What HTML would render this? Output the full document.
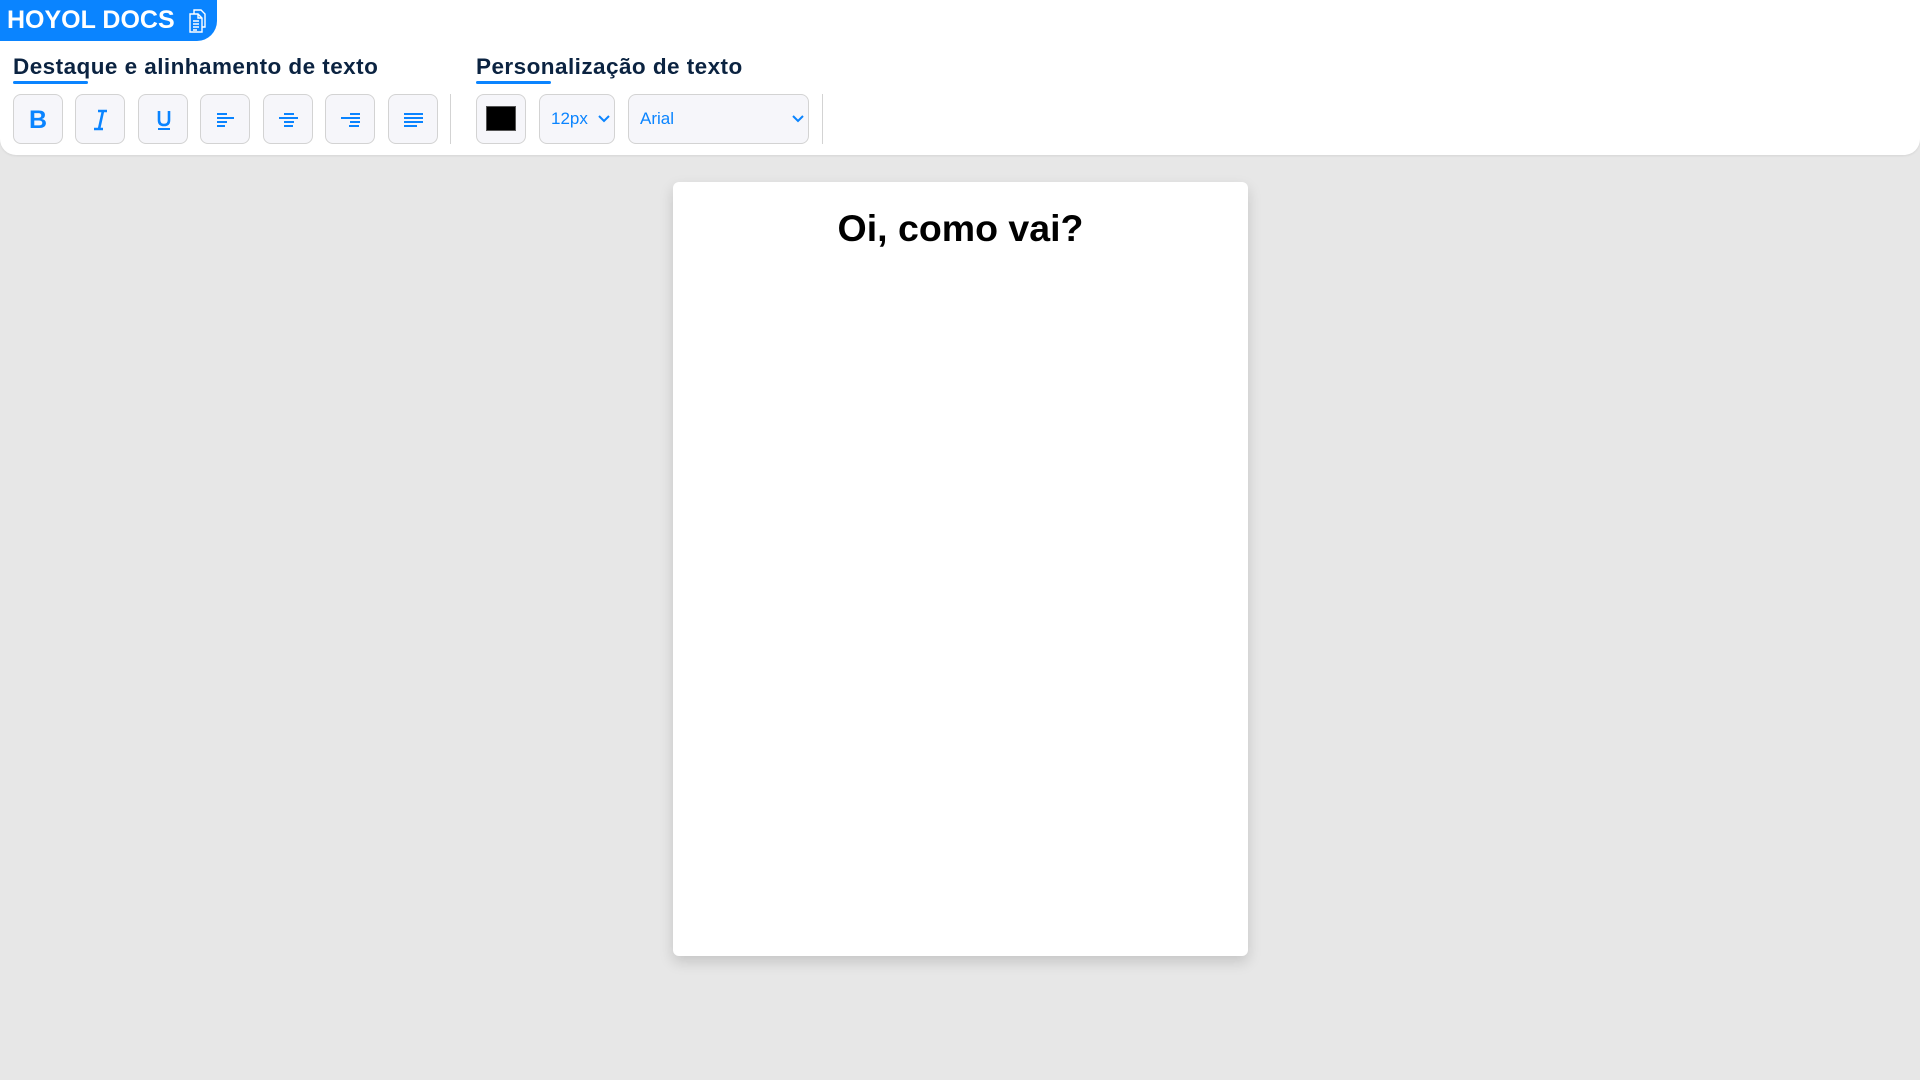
<!DOCTYPE html>
<html><head><meta charset="utf-8">
<style>
*{box-sizing:border-box;margin:0;padding:0}
body{width:1920px;height:1080px;background:#e7e7e7;font-family:"Liberation Sans",Arial,sans-serif;position:relative;overflow:hidden}
.bar{position:absolute;left:0;top:0;width:1920px;height:155px;background:#fff;border-radius:0 0 16px 16px;box-shadow:0 1px 2px rgba(0,0,0,.08)}
.badge{position:absolute;left:0;top:0;width:217px;height:41px;background:#0a84ff;border-bottom-right-radius:20px;color:#fff;font-weight:bold;font-size:25px;line-height:41px;padding-left:7px}
.badge svg{position:absolute;left:187px;top:9px}
.title{position:absolute;top:54px;font-size:22.5px;font-weight:bold;color:#0b2341;letter-spacing:.45px}
.ul{position:absolute;top:81px;height:3px;background:#0a84ff;border-radius:2px}
.btn{position:absolute;top:94px;width:50px;height:50px;background:#f6f6fa;border:1px solid #d3d3d3;border-radius:8px}
.btn svg{position:absolute;left:0;top:0}
.sep{position:absolute;top:94px;width:1px;height:50px;background:#d3d3d3}
.sel{position:absolute;top:94px;height:50px;background:#f6f6fa;border:1px solid #d3d3d3;border-radius:8px;color:#0a84ff;font-size:17px;line-height:48px;padding-left:11px}
.sel svg{position:absolute;top:20px}
.page{position:absolute;left:673px;top:182px;width:575px;height:774px;background:#fff;border-radius:6px;box-shadow:0 6px 14px rgba(0,0,0,.15)}
.page h1{text-align:center;font-size:37.5px;font-weight:bold;color:#000;margin-top:25px}
</style></head><body>
<div class="bar">
<div class="badge">HOYOL DOCS
<svg width="22" height="24" viewBox="0 0 22 24" fill="none" stroke="#fff" stroke-width="1.4"><path d="M7 1h7l4 4v13H7z"/><path d="M3 5h8l4 4v14H3z" fill="#0a84ff"/><path d="M11 5v4h4"/><path d="M6 12h6M6 15h6M6 18h6M6 21h4"/></svg></div>
<div class="title" style="left:13px">Destaque e alinhamento de texto</div>
<div class="ul" style="left:13px;width:75px"></div>
<div class="title" style="left:476px">Personalização de texto</div>
<div class="ul" style="left:476px;width:75px"></div>

<div class="btn" style="left:13px"><svg width="50" height="50"><text x="24" y="33" text-anchor="middle" font-family="Liberation Sans" font-weight="bold" font-size="25" fill="#0a84ff">B</text></svg></div>
<div class="btn" style="left:75px"><svg width="50" height="50"><path d="M22 16h9M18 34h9M27 16l-4 18" stroke="#0a84ff" stroke-width="2.6" fill="none"/></svg></div>
<div class="btn" style="left:138px"><svg width="50" height="50"><path d="M20 16v9q0 5 5 5t5-5v-9" stroke="#0a84ff" stroke-width="2.6" fill="none"/><path d="M19 34h12" stroke="#0a84ff" stroke-width="2"/></svg></div>
<div class="btn" style="left:200px"><svg width="50" height="50" stroke="#0a84ff" stroke-width="2"><path d="M16 19h10M16 23h17M16 27h10M16 31h8"/></svg></div>
<div class="btn" style="left:263px"><svg width="50" height="50" stroke="#0a84ff" stroke-width="2"><path d="M20 19h10M15 23h19M20 27h10M20 31h9"/></svg></div>
<div class="btn" style="left:325px"><svg width="50" height="50" stroke="#0a84ff" stroke-width="2"><path d="M24 19h10M15 23h19M24 27h10M23 31h10"/></svg></div>
<div class="btn" style="left:388px"><svg width="50" height="50" stroke="#0a84ff" stroke-width="2"><path d="M15 19h19M15 23h19M15 27h19M15 31h13"/></svg></div>
<div class="sep" style="left:450px"></div>

<div class="btn" style="left:476px"><div style="position:absolute;left:9px;top:11px;width:30px;height:25px;background:#000;border:1px solid #555"></div></div>
<div class="sel" style="left:539px;width:76px">12px<svg width="12" height="8" style="left:58px"><path d="M1 1l5 5 5-5" stroke="#0a84ff" stroke-width="2" fill="none"/></svg></div>
<div class="sel" style="left:628px;width:181px">Arial<svg width="12" height="8" style="left:163px"><path d="M1 1l5 5 5-5" stroke="#0a84ff" stroke-width="2" fill="none"/></svg></div>
<div class="sep" style="left:822px"></div>
</div>
<div class="page"><h1>Oi, como vai?</h1></div>
</body></html>
